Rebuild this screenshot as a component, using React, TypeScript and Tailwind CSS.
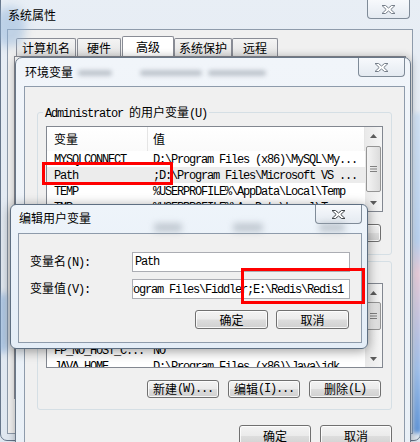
import React from "react";

const mono = "font-['Liberation_Mono',monospace] text-[12px] tracking-[-1.2px]";

function M({ children }: { children: React.ReactNode }) {
  return <span className={mono}>{children}</span>;
}

// Win7 style close glyph
function CloseX({ active }: { active?: boolean }) {
  return (
    <svg width="15" height="11" viewBox="0 0 15 11">
      <polygon
        points="1,1.5 4.5,1.5 7.5,4 10.5,1.5 14,1.5 9.8,5.5 14,9.5 10.5,9.5 7.5,7 4.5,9.5 1,9.5 5.2,5.5"
        fill="#ffffff"
        stroke={active ? "#3f4448" : "#767f8a"}
        strokeWidth="1"
        strokeLinejoin="round"
      />
    </svg>
  );
}

function CloseBtn({ active, className = "" }: { active?: boolean; className?: string }) {
  return (
    <div
      className={`flex shrink-0 items-center justify-center rounded-b-[4px] border border-t-0 border-[#7f8b98] bg-[linear-gradient(#f7f9fc,#e4eaf1)] ${className}`}
    >
      <CloseX active={active} />
    </div>
  );
}

function Btn({ children, className = "" }: { children: React.ReactNode; className?: string }) {
  return (
    <div
      className={`flex shrink-0 items-center justify-center whitespace-nowrap rounded-[3px] border border-[#707070] bg-[linear-gradient(180deg,#f3f3f3_0%,#ebebeb_48%,#dddddd_52%,#d0d0d0_100%)] shadow-[inset_0_0_0_1px_rgba(255,255,255,0.8)] leading-[14px] ${className}`}
    >
      {children}
    </div>
  );
}

function Tab({ label, active, className = "" }: { label: string; active?: boolean; className?: string }) {
  if (active) {
    return (
      <div className={`flex h-[21px] shrink-0 items-center justify-center rounded-t-[2px] border border-b-0 border-[#898c95] bg-white pb-[1px] ${className}`}>
        {label}
      </div>
    );
  }
  return (
    <div className={`flex h-[19px] shrink-0 items-center justify-center rounded-t-[2px] border border-b-0 border-[#898c95] bg-[linear-gradient(#f4f4f4,#e2e2e2)] ${className}`}>
      {label}
    </div>
  );
}

function Tri({ up }: { up?: boolean }) {
  return (
    <svg width="7" height="4" viewBox="0 0 7 4">
      <polygon points={up ? "0,4 3.5,0 7,4" : "0,0 3.5,4 7,0"} fill="#5b5b5b" />
    </svg>
  );
}

function ScrollBar({ thumbClass }: { thumbClass: string }) {
  return (
    <div className="flex w-[17px] shrink-0 flex-col bg-[linear-gradient(90deg,#e9e9e9,#f5f5f5)]">
      <div className="flex h-[17px] shrink-0 items-center justify-center">
        <Tri up />
      </div>
      <div
        className={`mx-[1px] flex shrink-0 items-center justify-center rounded-[2px] border border-[#959595] bg-[linear-gradient(90deg,#f4f4f4,#dcdcdc)] ${thumbClass}`}
      >
        <svg width="7" height="6" viewBox="0 0 7 6">
          <rect x="0" y="0" width="7" height="1" fill="#808080" />
          <rect x="0" y="2.5" width="7" height="1" fill="#808080" />
          <rect x="0" y="5" width="7" height="1" fill="#808080" />
        </svg>
      </div>
      <div className="flex-1" />
      <div className="flex h-[17px] shrink-0 items-center justify-center">
        <Tri />
      </div>
    </div>
  );
}

function ListView({
  rows,
  hClass,
  headClass,
  thumbClass,
  selected,
}: {
  rows: [string, string][];
  hClass: string;
  headClass: string;
  thumbClass: string;
  selected?: number;
}) {
  return (
    <div className={`flex w-[337px] shrink-0 overflow-hidden border border-[#828790] bg-white ${hClass}`}>
      <div className="flex min-w-0 flex-1 flex-col overflow-hidden">
        <div className={`flex shrink-0 items-center bg-[linear-gradient(#ffffff,#fafafa)] ${headClass}`}>
          <div className="flex h-full w-[101px] shrink-0 items-center border-r border-[#e5e5e5] pl-[7px]">变量</div>
          <div className="flex h-full flex-1 items-center border-r border-[#e5e5e5] pl-[5px]">值</div>
        </div>
        {rows.map(([name, value], i) => (
          <div
            key={i}
            className={`flex h-[16px] shrink-0 items-center leading-[16px] ${i === selected ? "bg-[#ececec]" : ""}`}
          >
            <div className="w-[101px] shrink-0 overflow-hidden whitespace-nowrap pl-[7px]">
              <M>{name}</M>
            </div>
            <div className="flex-1 overflow-hidden whitespace-nowrap pl-[5px]">
              <M>{value}</M>
            </div>
          </div>
        ))}
      </div>
      <ScrollBar thumbClass={thumbClass} />
    </div>
  );
}

function Group({ label, children, className = "" }: { label?: React.ReactNode; children: React.ReactNode; className?: string }) {
  return (
    <div className={`relative flex w-[355px] shrink-0 flex-col rounded-[3px] border border-[#d5dfe5] ${className}`}>
      {label && <div className="absolute left-[5px] top-[-9px] whitespace-nowrap bg-[#f0f0f0] px-[2px] leading-[16px]">{label}</div>}
      {children}
    </div>
  );
}

const userVars: [string, string][] = [
  ["MYSQLCONNECT", "D:\\Program Files (x86)\\MySQL\\My..."],
  ["Path", ";D:\\Program Files\\Microsoft VS ..."],
  ["TEMP", "%USERPROFILE%\\AppData\\Local\\Temp"],
  ["TMP", "%USERPROFILE%\\AppData\\Local\\Temp"],
];

const sysVars: [string, string][] = [
  ["classpath", ".;%JAVA_HOME%\\lib;..."],
  ["ComSpec", "%SystemRoot%\\system32\\cmd.exe"],
  ["FP_NO_HOST_C...", "NO"],
  ["JAVA_HOME", "D:\\Program Files (x86)\\Java\\jdk"],
];

export default function App() {
  return (
    <div className="relative h-[442px] w-[420px] overflow-hidden bg-[#dfe7f0] font-['Noto_Sans_CJK_SC',sans-serif] text-[12px] leading-[16px] text-black">
      {/* 系统属性 window */}
      <div className="absolute left-0 top-[-8px] flex h-[449px] w-[421px] flex-col rounded-[7px] border border-[#66768a] bg-[linear-gradient(#e8eef5,#dfe7f0)]">
        <div className="pointer-events-none absolute left-[-6px] top-[14px] h-[40px] w-[30px] rounded-full bg-[#8fb3da]/50 blur-[5px]" />
        <div className="pointer-events-none absolute left-[-2px] top-[300px] h-[60px] w-[8px] rounded-full bg-[#7ea9db]/60 blur-[3px]" />
        <div className="pointer-events-none absolute right-[-2px] top-[120px] h-[320px] w-[9px] bg-[linear-gradient(#cfe0f2,#b7d0ee_40%,#e6c9d6_50%,#9fc0ea_80%,#5d93d8)] blur-[2px]" />

        <div className="relative flex h-[36px] shrink-0 items-start">
          <span className="ml-[7px] mt-[14px]">系统属性</span>
          <CloseBtn className="ml-auto mr-[10px] mt-[7px] h-[19px] w-[43px]" />
        </div>

        <div className="mb-[6px] ml-[6px] mr-[7px] flex flex-1 flex-col border border-[#8e9bab] bg-[#f0f0f0]">
          <div className="flex items-end pl-[8px] pt-[6px]">
            <Tab label="计算机名" className="w-[60px]" />
            <Tab label="硬件" className="ml-[1px] w-[44px]" />
            <Tab label="高级" active className="ml-[1px] w-[52px]" />
            <Tab label="系统保护" className="w-[58px]" />
            <Tab label="远程" className="w-[46px]" />
          </div>
          <div className="-mt-[1px] ml-[6px] mr-[6px] h-[343px] border border-[#898c95] bg-white" />
        </div>
      </div>

      {/* 环境变量 window */}
      <div className="absolute left-[15px] top-[57px] flex h-[400px] w-[396px] flex-col rounded-t-[7px] border border-[#6a7888] bg-[linear-gradient(#f1f5fa,#e9f0f7)] shadow-[0_0_8px_rgba(0,0,0,0.3)]">
        <div className="relative flex h-[28px] shrink-0 items-start">
          <div className="pointer-events-none absolute left-[62px] top-[12px] h-[6px] w-[34px] rounded-full bg-[#9ea7b1]/60 blur-[2px]" />
          <div className="pointer-events-none absolute left-[124px] top-[12px] h-[6px] w-[62px] rounded-full bg-[#9ea7b1]/60 blur-[2px]" />
          <div className="pointer-events-none absolute left-[192px] top-[12px] h-[6px] w-[58px] rounded-full bg-[#9ea7b1]/60 blur-[2px]" />
          <span className="relative ml-[9px] mt-[6px]">环境变量</span>
          <CloseBtn className="ml-auto mr-[5px] h-[19px] w-[47px]" />
        </div>

        <div className="ml-[8px] flex w-[381px] flex-1 flex-col border border-[#8e9bab] bg-[#f0f0f0] pl-[12px] pr-[12px] pt-[25px]">
          {/* user variables */}
          <Group
            label={
              <>
                <M>Administrator </M>的用户变量<M>(U)</M>
              </>
            }
            className="pb-[12px] pl-[8px] pt-[13px]"
          >
            <ListView rows={userVars} hClass="h-[86px]" headClass="h-[24px]" thumbClass="mt-[2px] h-[46px]" selected={1} />
            <div className="mt-[12px] flex justify-end gap-[9px] pr-[10px]">
              <Btn className="h-[18px] w-[72px]">
                新建<M>(N)...</M>
              </Btn>
              <Btn className="h-[18px] w-[72px]">
                编辑<M>(E)...</M>
              </Btn>
              <Btn className="h-[18px] w-[72px]">
                删除<M>(D)</M>
              </Btn>
            </div>
          </Group>

          {/* system variables */}
          <Group
            label={
              <>
                系统变量<M>(S)</M>
              </>
            }
            className="mt-[6px] pb-[11px] pl-[8px] pt-[21px]"
          >
            <ListView rows={sysVars} hClass="h-[85px]" headClass="h-[26px]" thumbClass="mt-[1px] h-[28px]" />
            <div className="mt-[12px] flex justify-end gap-[9px] pr-[10px]">
              <Btn className="h-[18px] w-[72px]">
                新建<M>(W)...</M>
              </Btn>
              <Btn className="h-[18px] w-[72px]">
                编辑<M>(I)...</M>
              </Btn>
              <Btn className="h-[18px] w-[72px]">
                删除<M>(L)</M>
              </Btn>
            </div>
          </Group>

          <div className="mt-[15px] flex justify-end gap-[9px]">
            <Btn className="h-[22px] w-[72px]">确定</Btn>
            <Btn className="h-[22px] w-[72px]">取消</Btn>
          </div>
        </div>
      </div>

      {/* red mark around Path */}
      <div className="pointer-events-none absolute left-[42px] top-[162px] h-[23px] w-[131px] border-[3px] border-[#ff0000]" />

      {/* 编辑用户变量 dialog */}
      <div className="absolute left-[10px] top-[204px] flex h-[145px] w-[358px] flex-col rounded-[6px] border border-[#5e6f82] bg-[linear-gradient(#eef4fa,#e4edf7)] shadow-[0_2px_12px_rgba(0,0,0,0.4)]">
        <div className="relative flex h-[28px] shrink-0 items-start">
          <div className="pointer-events-none absolute left-[143px] top-[18px] h-[9px] w-[28px] rounded-[3px] bg-[#9aa3ad]/50 blur-[3px]" />
          <div className="pointer-events-none absolute left-[222px] top-[18px] h-[9px] w-[30px] rounded-[3px] bg-[#9aa3ad]/50 blur-[3px]" />
          <div className="pointer-events-none absolute left-[308px] top-[18px] h-[9px] w-[26px] rounded-[3px] bg-[#9aa3ad]/50 blur-[3px]" />
          <span className="relative ml-[8px] mt-[5px]">编辑用户变量</span>
          <CloseBtn active className="ml-auto mr-[5px] h-[19px] w-[47px]" />
        </div>

        <div className="ml-[7px] flex h-[110px] w-[344px] flex-col border border-[#8e9bab] bg-[#f0f0f0] pl-[11px] pr-[11px] pt-[18px]">
          <div className="flex h-[20px] items-center">
            <div className="w-[102px] shrink-0 whitespace-nowrap">
              变量名<M>(N):</M>
            </div>
            <div className="flex h-[20px] w-[218px] shrink-0 items-center border border-[#abadb3] bg-white pl-[2px]">
              <M>Path</M>
            </div>
          </div>
          <div className="mt-[7px] flex h-[20px] items-center">
            <div className="w-[102px] shrink-0 whitespace-nowrap">
              变量值<M>(V):</M>
            </div>
            <div className="flex h-[20px] w-[218px] shrink-0 items-center overflow-hidden whitespace-nowrap border border-[#abadb3] bg-white">
              <span className="-ml-[6px]">
                <M>rogram Files\Fiddler;E:\Redis\Redis1</M>
              </span>
            </div>
          </div>
          <div className="mt-[11px] flex justify-end gap-[8px] pr-[1px]">
            <Btn className="h-[19px] w-[73px]">确定</Btn>
            <Btn className="h-[19px] w-[73px]">取消</Btn>
          </div>
        </div>
      </div>

      {/* red mark around the value's end */}
      <div className="pointer-events-none absolute left-[241px] top-[268px] h-[36px] w-[124px] border-[3px] border-[#ff0000]" />
    </div>
  );
}
